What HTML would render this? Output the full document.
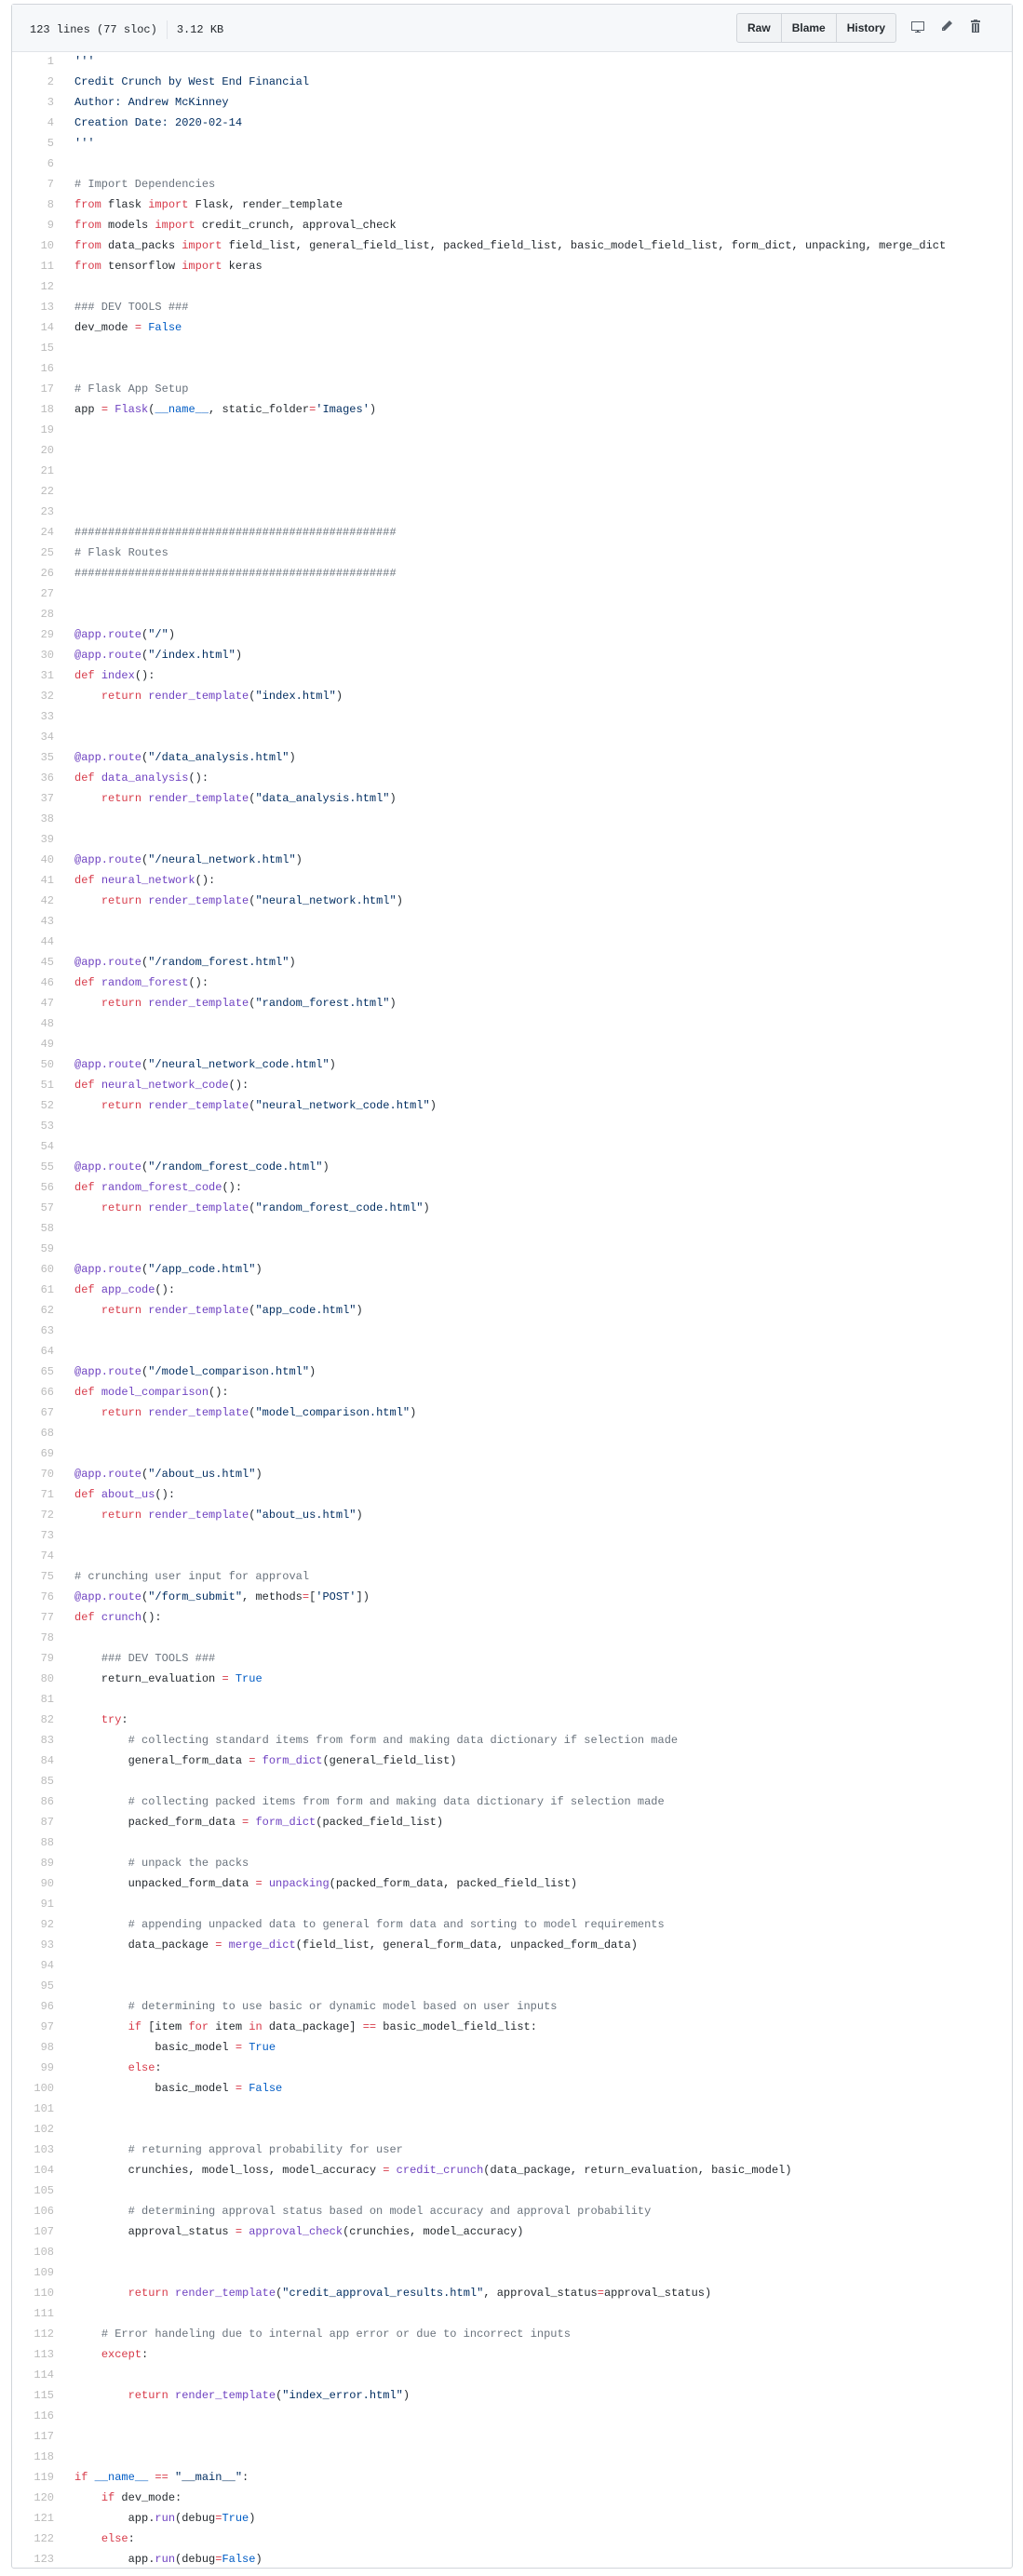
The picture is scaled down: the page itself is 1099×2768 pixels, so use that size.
<!DOCTYPE html>
<html><head><meta charset="utf-8">
<style>
html,body{margin:0;padding:0;background:#fff;width:1099px;height:2768px;overflow:hidden}
.box{position:absolute;left:12px;top:4px;width:1076px;height:2756px;border:1px solid #d1d5da;border-radius:3px;box-sizing:border-box}
.hdr{height:50px;background:#f6f8fa;border-bottom:1px solid #e1e4e8;position:relative;font-family:"Liberation Mono",monospace;font-size:12px;color:#24292e}
.info{position:absolute;left:19px;top:17px}
.sep{display:inline-block;width:1px;height:20px;background:#e1e4e8;vertical-align:middle;margin:0 10px}
.btns{position:absolute;left:778px;top:9px;height:30px;border:1px solid #d1d5da;border-radius:3px;background:#f1f3f5;display:flex;font-family:"Liberation Sans",sans-serif;font-size:12px;font-weight:bold;color:#24292e}
.btns div{padding:0 11px;line-height:30px;border-left:1px solid #d1d5da}
.btns div:first-child{border-left:none}
.code{position:absolute;left:0;top:50px;font-family:"Liberation Mono",monospace;font-size:12px;color:#24292e}
.ln{position:absolute;left:0;width:45px;text-align:right;color:#bbb;line-height:22px}
.tx{position:absolute;left:67px;white-space:pre;line-height:22px}
.k{color:#d73a49}.f{color:#6f42c1}.s{color:#032f62}.c{color:#6a737d}.n{color:#005cc5}
</style></head><body>
<div class="box">
<div class="hdr">
<div class="info">123 lines (77 sloc)<span class="sep"></span>3.12 KB</div>
<div class="btns"><div>Raw</div><div>Blame</div><div>History</div></div>
<svg style="position:absolute;left:965px;top:16px" width="16" height="16" viewBox="0 0 16 16"><path fill="#586069" d="M1 2h14v10H9v1h2v1H5v-1h2v-1H1V2zm1 1v8h12V3H2z"/></svg>
<svg style="position:absolute;left:997px;top:16px" width="14" height="16" viewBox="0 0 14 16"><path fill="#586069" d="M10 1l3 3-8 8H2V9l8-8zM3 10v1h1l-1-1z"/></svg>
<svg style="position:absolute;left:1029px;top:15px" width="12" height="16" viewBox="0 0 12 16"><path fill="#586069" d="M4 1h4v1h3v2H1V2h3V1zM2 5h8v10H2V5zm2 1v8h1V6H4zm3 0v8h1V6H7z"/></svg>
</div>
<div class="code" id="c"></div>
</div>
<script>
var L=[
'<span class="s">\'\'\'</span>',
'<span class="s">Credit Crunch by West End Financial</span>',
'<span class="s">Author: Andrew McKinney</span>',
'<span class="s">Creation Date: 2020-02-14</span>',
'<span class="s">\'\'\'</span>',
'',
'<span class="c"># Import Dependencies</span>',
'<span class="k">from</span> flask <span class="k">import</span> Flask, render_template',
'<span class="k">from</span> models <span class="k">import</span> credit_crunch, approval_check',
'<span class="k">from</span> data_packs <span class="k">import</span> field_list, general_field_list, packed_field_list, basic_model_field_list, form_dict, unpacking, merge_dict',
'<span class="k">from</span> tensorflow <span class="k">import</span> keras',
'',
'<span class="c">### DEV TOOLS ###</span>',
'dev_mode <span class="k">=</span> <span class="n">False</span>',
'','',
'<span class="c"># Flask App Setup</span>',
'app <span class="k">=</span> <span class="f">Flask</span>(<span class="n">__name__</span>, <span class="v">static_folder</span><span class="k">=</span><span class="s">\'Images\'</span>)',
'','','','','',
'<span class="c">################################################</span>',
'<span class="c"># Flask Routes</span>',
'<span class="c">################################################</span>',
'',''
];
function route(p,fn,t){L.push('<span class="f">@app.route</span>(<span class="s">"'+p+'"</span>)');L.push('<span class="k">def</span> <span class="f">'+fn+'</span>():');L.push('    <span class="k">return</span> <span class="f">render_template</span>(<span class="s">"'+t+'"</span>)');}
L.push('<span class="f">@app.route</span>(<span class="s">"/"</span>)');
route('/index.html','index','index.html');L.push('','');
route('/data_analysis.html','data_analysis','data_analysis.html');L.push('','');
route('/neural_network.html','neural_network','neural_network.html');L.push('','');
route('/random_forest.html','random_forest','random_forest.html');L.push('','');
route('/neural_network_code.html','neural_network_code','neural_network_code.html');L.push('','');
route('/random_forest_code.html','random_forest_code','random_forest_code.html');L.push('','');
route('/app_code.html','app_code','app_code.html');L.push('','');
route('/model_comparison.html','model_comparison','model_comparison.html');L.push('','');
route('/about_us.html','about_us','about_us.html');L.push('','');
L.push(
'<span class="c"># crunching user input for approval</span>',
'<span class="f">@app.route</span>(<span class="s">"/form_submit"</span>, <span class="v">methods</span><span class="k">=</span>[<span class="s">\'POST\'</span>])',
'<span class="k">def</span> <span class="f">crunch</span>():',
'',
'    <span class="c">### DEV TOOLS ###</span>',
'    return_evaluation <span class="k">=</span> <span class="n">True</span>',
'',
'    <span class="k">try</span>:',
'        <span class="c"># collecting standard items from form and making data dictionary if selection made</span>',
'        general_form_data <span class="k">=</span> <span class="f">form_dict</span>(general_field_list)',
'',
'        <span class="c"># collecting packed items from form and making data dictionary if selection made</span>',
'        packed_form_data <span class="k">=</span> <span class="f">form_dict</span>(packed_field_list)',
'',
'        <span class="c"># unpack the packs</span>',
'        unpacked_form_data <span class="k">=</span> <span class="f">unpacking</span>(packed_form_data, packed_field_list)',
'',
'        <span class="c"># appending unpacked data to general form data and sorting to model requirements</span>',
'        data_package <span class="k">=</span> <span class="f">merge_dict</span>(field_list, general_form_data, unpacked_form_data)',
'','',
'        <span class="c"># determining to use basic or dynamic model based on user inputs</span>',
'        <span class="k">if</span> [item <span class="k">for</span> item <span class="k">in</span> data_package] <span class="k">==</span> basic_model_field_list:',
'            basic_model <span class="k">=</span> <span class="n">True</span>',
'        <span class="k">else</span>:',
'            basic_model <span class="k">=</span> <span class="n">False</span>',
'','',
'        <span class="c"># returning approval probability for user</span>',
'        crunchies, model_loss, model_accuracy <span class="k">=</span> <span class="f">credit_crunch</span>(data_package, return_evaluation, basic_model)',
'',
'        <span class="c"># determining approval status based on model accuracy and approval probability</span>',
'        approval_status <span class="k">=</span> <span class="f">approval_check</span>(crunchies, model_accuracy)',
'','',
'        <span class="k">return</span> <span class="f">render_template</span>(<span class="s">"credit_approval_results.html"</span>, <span class="v">approval_status</span><span class="k">=</span>approval_status)',
'',
'    <span class="c"># Error handeling due to internal app error or due to incorrect inputs</span>',
'    <span class="k">except</span>:',
'',
'        <span class="k">return</span> <span class="f">render_template</span>(<span class="s">"index_error.html"</span>)',
'','','',
'<span class="k">if</span> <span class="n">__name__</span> <span class="k">==</span> <span class="s">"__main__"</span>:',
'    <span class="k">if</span> dev_mode:',
'        app.<span class="f">run</span>(<span class="v">debug</span><span class="k">=</span><span class="n">True</span>)',
'    <span class="k">else</span>:',
'        app.<span class="f">run</span>(<span class="v">debug</span><span class="k">=</span><span class="n">False</span>)'
);
var h='';
for(var i=0;i<L.length;i++){var y=i*22;h+='<div class="ln" style="top:'+y+'px">'+(i+1)+'</div><div class="tx" style="top:'+y+'px">'+(L[i]||' ')+'</div>';}
document.getElementById('c').innerHTML=h;
</script>
</body></html>
